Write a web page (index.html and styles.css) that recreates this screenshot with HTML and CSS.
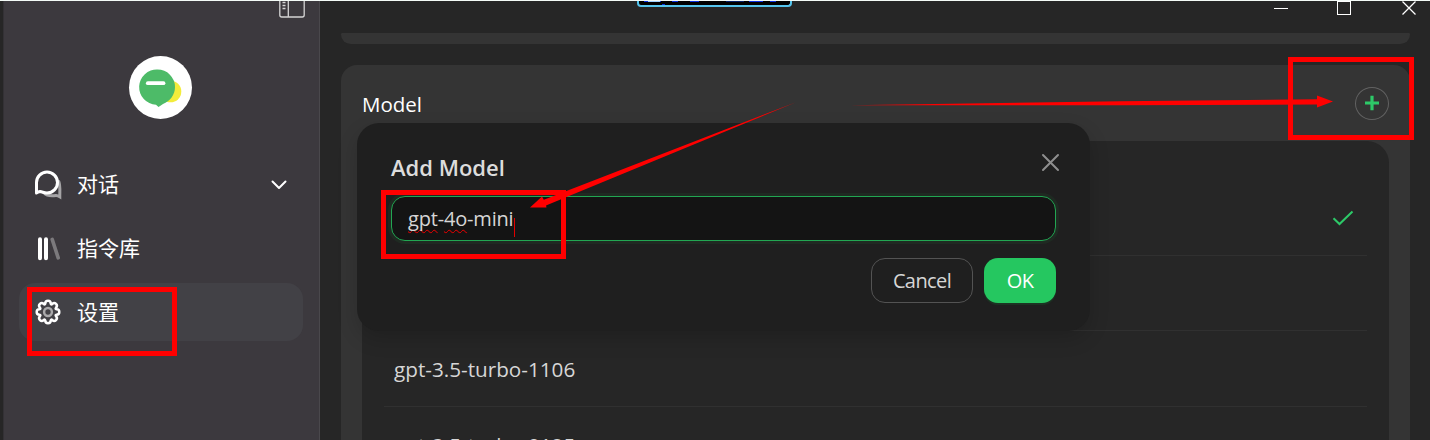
FILE: index.html
```html
<!DOCTYPE html>
<html lang="zh">
<head>
<meta charset="utf-8">
<title>Settings</title>
<link rel="stylesheet" href="styles.css">
</head>
<body>
<div class="window">
  <aside class="sidebar">
    <div class="sidebar-top">
      <svg class="panel-icon" width="26" height="19" viewBox="0 0 26 19" fill="none" stroke="#d4d4d4" stroke-width="1.3"><path d="M.8 0v15q0 2 2 2h20.400q2 0 2-2V0M9.300 0v17M3.500 2.500h3M3.500 5.500h3M3.500 8.500h3"/></svg>
    </div>
    <div class="avatar">
      <svg width="63" height="63" viewBox="0 0 63 63"><circle cx="41.500" cy="35.500" r="10.800" fill="#f3ec3b"/><path d="M28.500 13.500a17.500 17.500 0 0 1 17.500 17.500c0 8-5 14-12 17l-4.500 3-2.500-2.300A17.500 17.500 0 0 1 28.500 13.500z" fill="#4dbb68"/><path d="M18.800 27.200h15.700" stroke="#fff" stroke-width="3.800" stroke-linecap="round"/></svg>
    </div>
    <nav class="nav">
      <div class="nav-item">
        <svg class="nav-icon" width="30" height="30" viewBox="0 0 30 30" fill="none" stroke-width="3"><path d="M25.800 11.500c1.500 4 1 7.500 1 15.200-1.500-1-2.500-1.400-4-1.300-5 .8-9 .5-12-3" stroke="#a5a4a6" stroke-linecap="round"/><path d="M3.500 22V12.500A10.500 10.500 0 1 1 14 23c-2.500 0-4.300-1-7-1.500-1.200 0-2 .8-3.500 1.500z" fill="#3d3a3f" stroke="#fff" stroke-linejoin="round"/></svg>
        <span class="nav-label">对话</span>
        <svg class="chevron" width="18" height="12" viewBox="0 0 18 12" fill="none" stroke="#fff" stroke-width="2" stroke-linecap="round" stroke-linejoin="round"><path d="M2.500 2.500 9 9l6.500-6.500"/></svg>
      </div>
      <div class="nav-item">
        <svg class="nav-icon" width="30" height="30" viewBox="0 0 30 30" fill="none" stroke="#fff" stroke-width="4" stroke-linecap="round"><path d="M7 5.200v19M13 5.200v19"/><path d="m19.200 5.400 6 18.500" stroke="#7c7a7d" stroke-width="3.600"/></svg>
        <span class="nav-label">指令库</span>
      </div>
      <div class="nav-item active">
        <svg class="nav-icon gear" width="30" height="30" viewBox="0 0 30 30" fill="none" stroke-width="2.500"><circle cx="15" cy="15" r="3.900" stroke="#aaa9ab"/><path stroke="#fff" stroke-linejoin="round" d="M12.300 6.400C12.300 2.800 17.700 2.800 17.700 6.400Q18.100 8 19.200 7C21.900 4.500 25.500 8.100 23 10.800Q22 11.900 23.600 12.300C27.200 12.300 27.200 17.700 23.600 17.700Q22 18.100 23 19.200C25.500 21.900 21.900 25.500 19.200 23Q18.100 22 17.700 23.600C17.700 27.200 12.300 27.200 12.300 23.600Q11.900 22 10.800 23C8.100 25.500 4.500 21.900 7 19.200Q8 18.100 6.400 17.700C2.800 17.700 2.800 12.300 6.400 12.300Q8 11.900 7 10.800C4.500 8.100 8.100 4.500 10.800 7Q11.900 8 12.300 6.400z"/></svg>
        <span class="nav-label">设置</span>
      </div>
    </nav>
  </aside>
  <main class="main">
    <header class="titlebar">
      <svg width="142" height="16" viewBox="0 0 142 16" fill="none" stroke="#fff" shape-rendering="crispEdges"><path d="M0 8.500h14M63.500 1.500h13v13h-13z"/><path shape-rendering="auto" stroke-width="1.300" d="m128.500 1.500 13 13m0-13-13 13"/></svg>
    </header>
    <section class="card-tail"></section>
    <section class="card">
      <div class="card-head">
        <h2 class="card-title">Model</h2>
        <button class="add" aria-label="Add"><svg width="16" height="16" viewBox="0 0 16 16" stroke="#2dc968" stroke-width="3.200"><path d="M1 8h14M8 .8v14.400"/></svg></button>
      </div>
      <div class="models">
        <div class="row"><svg class="check" width="22" height="16" viewBox="0 0 22 16" fill="none" stroke="#2dc968" stroke-width="2"><path d="m1.500 8.300 6 5.700L20.500 1.500"/></svg></div>
        <div class="row"></div>
        <div class="row"><span class="model-name">gpt-3.5-turbo-1106</span></div>
        <div class="row"><span class="model-name">gpt-3.5-turbo-0125</span></div>
      </div>
    </section>
  </main>
</div>

<div class="dock"><svg width="149" height="5" viewBox="0 0 149 5"><path fill="#0a2fe0" d="M4 0h17v1H4zM32 0h6v1h-6zM50 0h9v1h-9zM109 0h14v1h-14zM130 0h6v1h-6zM22 3h3v1h-3z"/><path fill="#061f66" d="M86 0h18v1H86z"/><path fill="#9fd0ff" d="M8 0h12v1H8z"/></svg></div>

<div class="dialog">
  <div class="dialog-head">
    <h3 class="dialog-title">Add Model</h3>
    <svg class="close" width="19" height="19" viewBox="0 0 19 19" stroke="#8e8e8e" stroke-width="2" stroke-linecap="round"><path d="m2 2 15 15m0-15L2 17"/></svg>
  </div>
  <div class="field"><span class="field-text"><span class="typo">gpt</span>-<span class="typo">4o</span>-mini</span><i class="caret"></i></div>
  <div class="actions">
    <button class="btn">Cancel</button>
    <button class="btn primary">OK</button>
  </div>
</div>

<svg class="marks" width="1430" height="440" viewBox="0 0 1430 440" fill="none">
  <g stroke="#f00" stroke-width="5"><path d="M29.500 289.500h145v64h-145zM383.500 192.500h180v64h-180zM1290.500 59.500h121v78h-121z"/></g>
  <g fill="#f00"><path d="M530 207.500l12-11 1.800 3.200L796 102.200 546 205.500l.5 2z"/><path d="M850 105.300l270-4 197-2.100v-3.600l16 5.900-16 6v-3l-197 .7z"/></g>
</svg>
<div class="topline"></div>
</body>
</html>
```
FILE: styles.css
```css
* { box-sizing: border-box; }
body {
  margin: 0;
  width: 1430px;
  height: 440px;
  overflow: hidden;
  position: relative;
  background: #262626;
  color: #fff;
  font-family: "Open Sans", "Noto Sans CJK SC", sans-serif;
}
h2, h3 { margin: 0; }
button { font: inherit; padding: 0; }
svg { display: block; flex: none; }

.window { display: flex; height: 440px; padding-left: 3px; overflow: hidden; }
.sidebar {
  flex: none;
  width: 317px;
  height: 440px;
  padding: 0 16px;
  background: #3c393e;
  border-left: 1px solid #333135;
  border-right: 1px solid #4a484c;
}
.sidebar-top { height: 56px; display: flex; justify-content: flex-end; align-items: flex-start; }
.panel-icon { margin-right: -2px; }
.avatar { width: 63px; height: 63px; margin-left: 109px; border-radius: 50%; background: #fff; }
.nav { display: flex; flex-direction: column; gap: 6px; padding-top: 36px; margin-left: -1px; }
.nav-item { display: flex; align-items: center; width: 284px; height: 58px; padding: 0 15px 0 14px; border-radius: 16px; }
.nav-item.active { background: #424146; }
.nav-icon { margin-top: 2px; }
.nav-icon.gear { margin-top: 0; }
.nav-label { margin-left: 14px; margin-top: -2px; font-size: 21px; line-height: 30px; font-family: "Noto Sans CJK SC", sans-serif; }
.chevron { margin-left: auto; margin-top: 2px; }

.main { flex: 1; height: 440px; padding: 0 20px 0 21px; overflow: hidden; }
.titlebar { height: 33px; display: flex; justify-content: flex-end; margin-right: -6px; }
.card-tail { height: 11px; background: #343434; border-radius: 2px 2px 16px 16px; margin-bottom: 21px; }
.card { padding: 0 21px; height: 400px; background: #343434; border-radius: 16px 16px 0 0; }
.card-head { height: 76px; display: flex; align-items: center; justify-content: space-between; }
.card-title { font-size: 20.5px; line-height: 28px; font-weight: 400; padding-top: 2px; }
.add { width: 34px; height: 33px; display: grid; place-items: center; border-radius: 50%; border: 1px solid #626262; background: none; }
.models { height: 330px; padding: 39px 22px 0; background: #262626; border-radius: 22px 22px 0 0; }
.row { height: 75.500px; display: flex; align-items: center; padding: 0 13px 0 10px; border-bottom: 1px solid #303030; }
.check { margin-left: auto; margin-top: 1px; }
.model-name { font-size: 20.700px; line-height: 28px; padding-top: 2px; color: #d6d6d6; }

.dock { position: absolute; left: 637px; top: 0; width: 155px; height: 7px; padding: 1px 1px 0; background: #000; border: 2px solid #55c5ee; border-top: 0; border-radius: 0 0 4px 4px; overflow: hidden; }
.dialog {
  position: absolute;
  left: 357px;
  top: 123px;
  width: 733px;
  height: 208px;
  padding: 29px 34px 28px;
  display: flex;
  flex-direction: column;
  background: #1f1f1f;
  border-radius: 22px;
  box-shadow: 0 8px 20px rgba(0, 0, 0, .16);
}
.dialog-head { height: 44px; display: flex; justify-content: space-between; align-items: flex-start; }
.dialog-title { font-size: 22px; line-height: 30px; font-weight: 600; color: #dcdcdc; }
.close { margin-right: -4px; margin-top: 1px; }
.field { height: 45px; display: flex; align-items: center; padding-left: 16px; background: #141414; border: 1px solid #22a652; border-radius: 14px; box-shadow: 0 0 0 3px #1f2a22; }
.field-text { font-size: 20px; line-height: 28px; letter-spacing: -.18px; font-weight: 450; color: #d6d6d6; }
.typo { text-decoration: underline wavy #f00000 1px; text-underline-offset: 3px; text-decoration-skip-ink: none; }
.caret { width: 1px; height: 19px; background: #e00000; margin: 17px 0 0 1px; }
.actions { display: flex; justify-content: flex-end; gap: 11px; margin-top: 17px; }
.btn { width: 102px; height: 45px; border: 1px solid #535353; border-radius: 14px; background: none; color: #d6d6d6; font-size: 20px; line-height: 28px; letter-spacing: -.6px; font-weight: 450; }
.primary { width: 72px; border: 0; background: #25c760; color: #fff; box-shadow: 0 2px 1px #1d3424; }
.marks { position: absolute; left: 0; top: 0; }
.topline { position: absolute; left: 0; top: 0; width: 1430px; height: 1px; background: #f4fbf7; }
```
